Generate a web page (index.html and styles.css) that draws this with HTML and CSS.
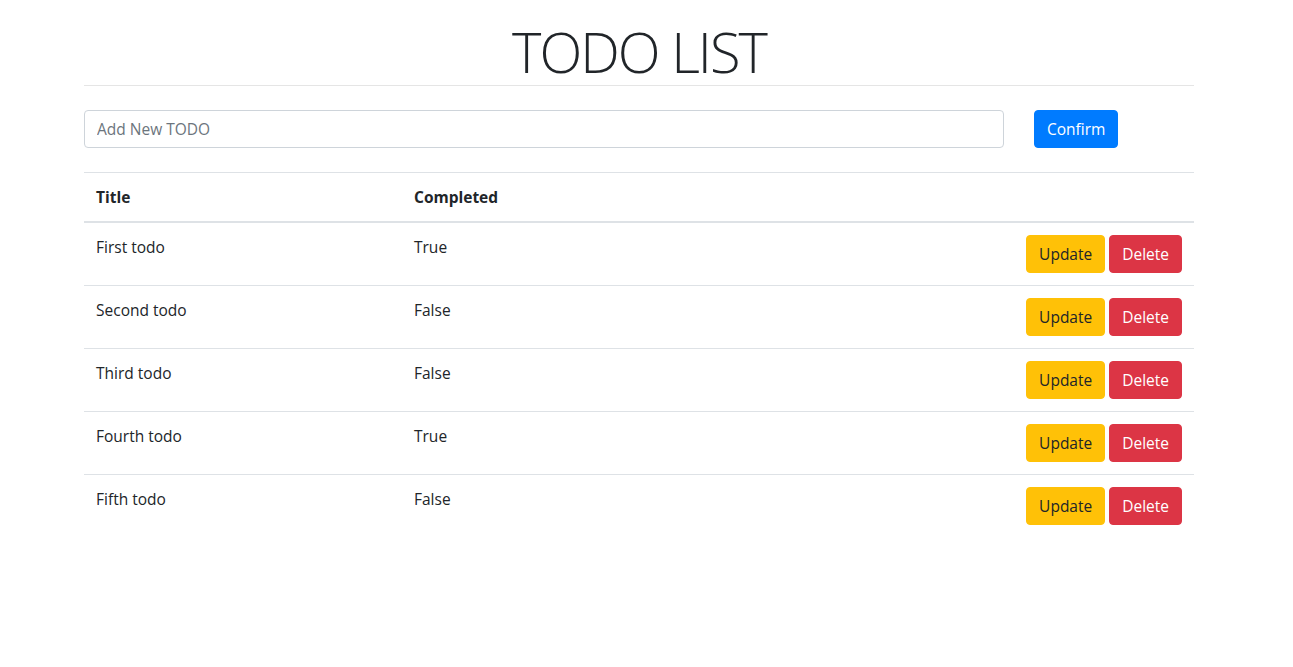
FILE: index.html
```html
<!DOCTYPE html>
<html lang="en">
<head>
<meta charset="utf-8">
<title>TODO LIST</title>
<link rel="stylesheet" href="styles.css">
</head>
<body>
<div class="page">
  <div class="container">
    <h1 class="title">TODO LIST</h1>
    <hr class="divider">
    <form class="add-row" onsubmit="return false">
      <div class="add-input-col">
        <input class="add-input" type="text" placeholder="Add New TODO">
      </div>
      <div class="add-btn-col">
        <button class="btn btn-primary" type="button">Confirm</button>
      </div>
    </form>
    <table class="todo-table">
      <thead>
        <tr>
          <th class="col-title">Title</th>
          <th class="col-completed">Completed</th>
          <th class="col-actions"></th>
        </tr>
      </thead>
      <tbody>
        <tr><td>First todo</td><td>True</td><td class="actions"><button class="btn btn-warning">Update</button><button class="btn btn-danger">Delete</button></td></tr>
        <tr><td>Second todo</td><td>False</td><td class="actions"><button class="btn btn-warning">Update</button><button class="btn btn-danger">Delete</button></td></tr>
        <tr><td>Third todo</td><td>False</td><td class="actions"><button class="btn btn-warning">Update</button><button class="btn btn-danger">Delete</button></td></tr>
        <tr><td>Fourth todo</td><td>True</td><td class="actions"><button class="btn btn-warning">Update</button><button class="btn btn-danger">Delete</button></td></tr>
        <tr><td>Fifth todo</td><td>False</td><td class="actions"><button class="btn btn-warning">Update</button><button class="btn btn-danger">Delete</button></td></tr>
      </tbody>
    </table>
  </div>
</div>
</body>
</html>
```

FILE: styles.css
```css
* { box-sizing: border-box; }
html, body { margin: 0; padding: 0; background: #fff; }
body {
  font-family: "Open Sans", "Noto Sans", "Liberation Sans", sans-serif;
  font-size: 15.5px;
  line-height: 24px;
  color: #212529;
}
.page {
  width: 1278px;
  padding-top: 18px;
}
.container {
  width: 1110px;
  margin: 0 auto;
}
.title {
  margin: 0;
  text-align: center;
  font-size: 56px;
  font-weight: 300;
  line-height: 67px;
  letter-spacing: -2px;
  color: #212529;
}
.divider {
  margin: 0 0 24px;
  border: 0;
  border-top: 1px solid rgba(0,0,0,.1);
  height: 0;
}
.add-row {
  display: flex;
  gap: 30px;
  margin: 0 0 24px;
}
.add-input-col { width: 920px; }
.add-input {
  display: block;
  width: 100%;
  height: 38px;
  padding: 6px 12px;
  font: inherit;
  color: #495057;
  border: 1px solid #ced4da;
  border-radius: 4px;
  background: #fff;
  outline: none;
}
.add-input::placeholder { color: #6c757d; }
.btn {
  display: inline-block;
  height: 38px;
  padding: 6px 12px;
  font: inherit;
  line-height: 24px;
  border: 1px solid transparent;
  border-radius: 4px;
  cursor: pointer;
}
.btn-primary { background: #007bff; border-color: #007bff; color: #fff; }
.btn-warning { background: #ffc107; border-color: #ffc107; color: #212529; }
.btn-danger { background: #dc3545; border-color: #dc3545; color: #fff; }
.todo-table {
  width: 100%;
  border-collapse: collapse;
}
.todo-table th,
.todo-table td {
  padding: 12px;
  border-top: 1px solid #dee2e6;
  vertical-align: top;
  text-align: left;
}
.todo-table thead th {
  border-bottom: 2px solid #dee2e6;
  font-weight: 700;
}
.col-title { width: 318px; }
.col-completed { width: 300px; }
.actions { text-align: right !important; white-space: nowrap; }
.actions .btn + .btn { margin-left: 4px; }
```
